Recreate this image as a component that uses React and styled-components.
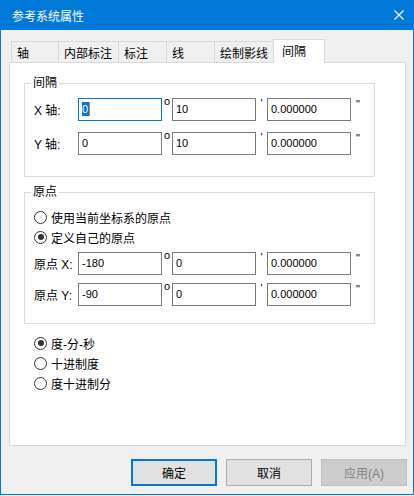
import React from 'react'
import styled, { createGlobalStyle } from 'styled-components'

const GlobalStyle = createGlobalStyle`
html, body {
    margin: 0;
    padding: 0;
    background: #f0f0f0;
}
* {
    box-sizing: border-box;
}
`

const uiFont = `"Liberation Sans", "Noto Sans CJK SC", sans-serif`

const Window = styled.div`
width: 414px;
height: 495px;
border: 1px solid #0078d7;
border-top: none;
background: #f0f0f0;
font-family: ${uiFont};
font-size: 12px;
color: #000;
display: flex;
flex-direction: column;
`

const TitleBar = styled.div`
height: 30px;
margin: 0 -1px;
background: #0078d7;
color: #fff;
display: flex;
align-items: center;
justify-content: space-between;
padding: 0 10px 0 12px;
font-size: 12px;
`

const CloseIcon = styled.svg`
width: 10px;
height: 10px;
`

const Body = styled.div`
padding: 9px 7px 0 8px;
display: flex;
flex-direction: column;
`

const TabStrip = styled.div`
display: flex;
align-items: flex-end;
height: 23px;
padding-left: 2px;
`

const Tab = styled.div`
width: ${p => p.$w}px;
height: ${p => (p.$active ? 24 : 21)}px;
margin-bottom: ${p => (p.$active ? -1 : 0)}px;
position: relative;
z-index: ${p => (p.$active ? 1 : 0)};
background: ${p => (p.$active ? '#fff' : '#f0f0f0')};
border: 1px solid #d9d9d9;
border-bottom: none;
border-right: ${p => (p.$active ? '1px solid #d9d9d9' : 'none')};
display: flex;
align-items: center;
padding-left: ${p => (p.$active ? 8 : 5)}px;
padding-bottom: ${p => (p.$active ? 2 : 0)}px;
white-space: nowrap;
`

const Panel = styled.div`
height: 384px;
background: #fff;
border: 1px solid #d9d9d9;
padding: 12px 0 0 14px;
display: flex;
flex-direction: column;
`

const Group = styled.fieldset`
width: 351px;
margin: ${p => p.$gap || 0}px 0 0 0;
padding: 0;
border: 1px solid #dcdcdc;
min-width: 0;
`

const Legend = styled.legend`
margin-left: 6px;
padding: 0 2px;
line-height: 16px;
height: 16px;
font-size: 12px;
`

const GroupInner = styled.div`
display: flex;
flex-direction: column;
padding: 7px 0 ${p => p.$bottom}px 9px;
`

const Rows = styled.div`
display: flex;
flex-direction: column;
gap: ${p => p.$gap}px;
margin-top: ${p => p.$top || 0}px;
`

const FieldRow = styled.div`
display: grid;
grid-template-columns: 44px 84px 10px 84px 11px 84px 14px;
height: 23px;
align-items: stretch;
`

const RowLabel = styled.span`
align-self: center;
white-space: nowrap;
`

const Field = styled.div`
border: 1px solid ${p => (p.$focused ? '#0078d7' : '#7a7a7a')};
background: #fff;
display: flex;
align-items: center;
padding: 0 2px 1px 3px;
font-size: 11px;
font-family: "Liberation Sans", sans-serif;
`

const Selected = styled.span`
background: #0078d7;
color: #fff;
line-height: 14px;
padding: 0 1px 0 0;
border-right: 1px solid #e07a20;
`

const Mark = styled.span`
text-align: center;
font-family: "Liberation Sans", sans-serif;
font-size: ${p => p.$size || 11}px;
line-height: 1;
margin-top: ${p => p.$top || 0}px;
`

const RadioList = styled.div`
display: flex;
flex-direction: column;
padding-left: ${p => p.$pad || 0}px;
margin-top: ${p => p.$top || 0}px;
`

const RadioRow = styled.label`
display: flex;
align-items: center;
height: 20px;
gap: 4px;
white-space: nowrap;
`

const RadioDot = styled.span`
width: 13px;
height: 13px;
border-radius: 50%;
border: 1px solid #333;
background: #fff;
display: flex;
align-items: center;
justify-content: center;

&::after {
    content: '';
    width: 6px;
    height: 6px;
    border-radius: 50%;
    background: ${p => (p.$on ? '#333' : 'transparent')};
}
`

const ButtonBar = styled.div`
display: flex;
justify-content: flex-end;
gap: 9px;
margin-top: 13px;
margin-right: -1px;
`

const Button = styled.button`
width: 86px;
height: 27px;
font-family: ${uiFont};
font-size: 12px;
padding: 0;
background: ${p => (p.$disabled ? '#cccccc' : '#e1e1e1')};
color: ${p => (p.$disabled ? '#838383' : '#000')};
border: ${p => (p.$primary ? '2px solid #0078d7' : p.$disabled ? '1px solid #bfbfbf' : '1px solid #adadad')};
`

const tabs = [
    { label: '轴', w: 47 },
    { label: '内部标注', w: 60 },
    { label: '标注', w: 48 },
    { label: '线', w: 48 },
    { label: '绘制影线', w: 59 },
    { label: '间隔', w: 52, active: true },
]

const Radio = ({ on, children }) => (
    <RadioRow>
        <RadioDot $on={on} />
        <span>{children}</span>
    </RadioRow>
)

// degree / minute / second inputs on one line
const DmsRow = ({ label, d, m, s, focused }) => (
    <FieldRow>
        <RowLabel>{label}</RowLabel>
        <Field $focused={focused}>{focused ? <Selected>{d}</Selected> : d}</Field>
        <Mark $size={11} $top={-2}>o</Mark>
        <Field>{m}</Field>
        <Mark $top={0}>'</Mark>
        <Field>{s}</Field>
        <Mark $top={1}>"</Mark>
    </FieldRow>
)

const App = () => {
    return (
        <>
            <GlobalStyle />
            <Window>
                <TitleBar>
                    <span>参考系统属性</span>
                    <CloseIcon viewBox="0 0 10 10">
                        <path d="M0.5 0.5 L9.5 9.5 M9.5 0.5 L0.5 9.5" stroke="#fff" strokeWidth="1.1" fill="none" />
                    </CloseIcon>
                </TitleBar>
                <Body>
                    <TabStrip>
                        {tabs.map(t => (
                            <Tab key={t.label} $w={t.w} $active={t.active}>{t.label}</Tab>
                        ))}
                    </TabStrip>
                    <Panel>
                        <Group>
                            <Legend>间隔</Legend>
                            <GroupInner $bottom={21}>
                                <Rows $gap={11}>
                                    <DmsRow label="X 轴:" d="0" m="10" s="0.000000" focused />
                                    <DmsRow label="Y 轴:" d="0" m="10" s="0.000000" />
                                </Rows>
                            </GroupInner>
                        </Group>
                        <Group $gap={7}>
                            <Legend>原点</Legend>
                            <GroupInner $bottom={17}>
                                <RadioList>
                                    <Radio>使用当前坐标系的原点</Radio>
                                    <Radio on>定义自己的原点</Radio>
                                </RadioList>
                                <Rows $gap={8} $top={5}>
                                    <DmsRow label="原点 X:" d="-180" m="0" s="0.000000" />
                                    <DmsRow label="原点 Y:" d="-90" m="0" s="0.000000" />
                                </Rows>
                            </GroupInner>
                        </Group>
                        <RadioList $pad={10} $top={9}>
                            <Radio on>度-分-秒</Radio>
                            <Radio>十进制度</Radio>
                            <Radio>度十进制分</Radio>
                        </RadioList>
                    </Panel>
                    <ButtonBar>
                        <Button $primary>确定</Button>
                        <Button>取消</Button>
                        <Button $disabled>应用(A)</Button>
                    </ButtonBar>
                </Body>
            </Window>
        </>
    )
}

export default App
